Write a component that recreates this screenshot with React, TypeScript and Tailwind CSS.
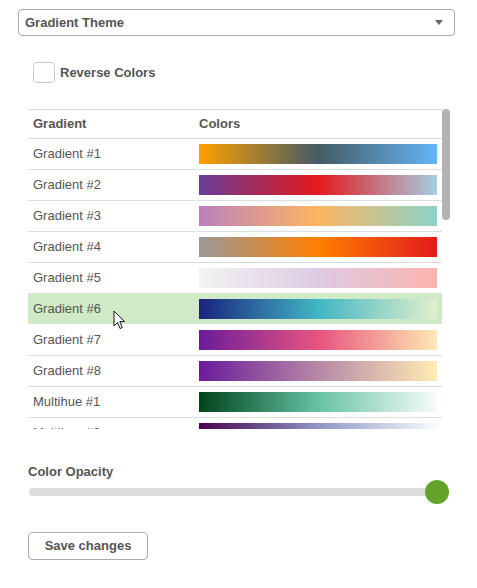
import React from "react";

const rows: { name: string; bg: string; hover?: boolean }[] = [
  { name: "Gradient #1", bg: "linear-gradient(to right, #ffa000 0%, #455a64 50%, #64b5f6 100%)" },
  { name: "Gradient #2", bg: "linear-gradient(to right, #6a3d9a 0%, #e31a1c 50%, #a6cee3 100%)" },
  { name: "Gradient #3", bg: "linear-gradient(to right, #bc80bd 0%, #fdb462 50%, #8dd3c7 100%)" },
  { name: "Gradient #4", bg: "linear-gradient(to right, #999999 0%, #ff7f00 50%, #e41a1c 100%)" },
  { name: "Gradient #5", bg: "linear-gradient(to right, #f2f2f2 0%, #decbe4 50%, #fbb4ae 100%)" },
  { name: "Gradient #6", bg: "linear-gradient(to right, #1a237e 0%, #41b6c4 50%, #e2f0cc 100%)", hover: true },
  { name: "Gradient #7", bg: "linear-gradient(to right, #6a1b9a 0%, #e75480 50%, #ffe9b3 100%)" },
  { name: "Gradient #8", bg: "linear-gradient(to right, #6a1b9a 0%, #b688a6 50%, #ffecb3 100%)" },
  { name: "Multihue #1", bg: "linear-gradient(to right, #00441b 0%, #66c2a4 50%, #f7fcfd 100%)" },
  { name: "Multihue #2", bg: "linear-gradient(to right, #4d004b 0%, #8c96c6 50%, #f7fcfd 100%)" },
];

export default function App() {
  return (
    <div className="relative w-[477px] h-[588px] bg-white text-[13px] text-[#555] font-['Liberation_Sans',Arial,sans-serif]">
      {/* select */}
      <div className="pt-[9px] pl-[18px]">
        <div className="w-[437px] h-[27px] border border-[#aaa] rounded-[4px] flex items-center justify-between pl-[6px] pr-[11px]">
          <span className="font-bold text-[#555]">Gradient Theme</span>
          <span className="w-0 h-0 border-l-[4px] border-r-[4px] border-t-[5px] border-l-transparent border-r-transparent border-t-[#666]" />
        </div>
      </div>

      {/* checkbox */}
      <div className="mt-[26px] ml-[33px] flex items-center gap-[5px] h-[21px]">
        <div className="w-[22px] h-[21px] border border-[#ccc] rounded-[3px] bg-white" />
        <span className="font-bold">Reverse Colors</span>
      </div>

      {/* table */}
      <div className="mt-[26px] ml-[28px] flex h-[320px]">
        <div className="w-[414px] h-[320px] overflow-hidden">
          <div className="flex h-[29px] border-t border-[#ddd] items-center font-bold">
            <div className="w-[171px] pl-[5px]">Gradient</div>
            <div>Colors</div>
          </div>
          {rows.map((r, i) => {
            const prevHover = i > 0 && rows[i - 1].hover;
            return (
              <div
                key={r.name}
                className={
                  "flex h-[31px] items-center border-t " +
                  (r.hover ? "bg-[#d0e9c6] border-[#d0e9c6]" : prevHover ? "border-white" : "border-[#ddd]")
                }
              >
                <div className="w-[171px] pl-[5px]">{r.name}</div>
                <div className="w-[238px] h-[20px]" style={{ background: r.bg }} />
              </div>
            );
          })}
        </div>
        <div className="w-[8px] h-[111px] rounded-[4px] bg-[#b3b3b3]" />
      </div>

      {/* color opacity */}
      <div className="mt-[35px] ml-[28px] font-bold leading-[16px]">Color Opacity</div>
      <div className="ml-[29px] w-[420px] h-[24px] relative">
        <div className="absolute left-0 right-0 top-[8px] h-[8px] rounded-full bg-[#dddddd]" />
        <div className="absolute left-[396px] top-0 w-[24px] h-[24px] rounded-full bg-[#62a32b]" />
      </div>

      {/* button */}
      <div className="mt-[28px] ml-[28px]">
        <button className="w-[120px] h-[28px] border border-[#adadad] rounded-[4px] bg-white font-bold text-[#555] flex items-center justify-center">
          Save changes
        </button>
      </div>

      {/* cursor */}
      <svg className="absolute left-[113px] top-[310px]" width="14" height="20" viewBox="0 0 14 20">
        <path
          d="M1 1 L1 16 L4.5 12.5 L7 18.5 L9.3 17.5 L6.8 11.6 L11.5 11.6 Z"
          fill="white"
          stroke="#111"
          strokeWidth="1"
          strokeLinejoin="miter"
        />
      </svg>
    </div>
  );
}
